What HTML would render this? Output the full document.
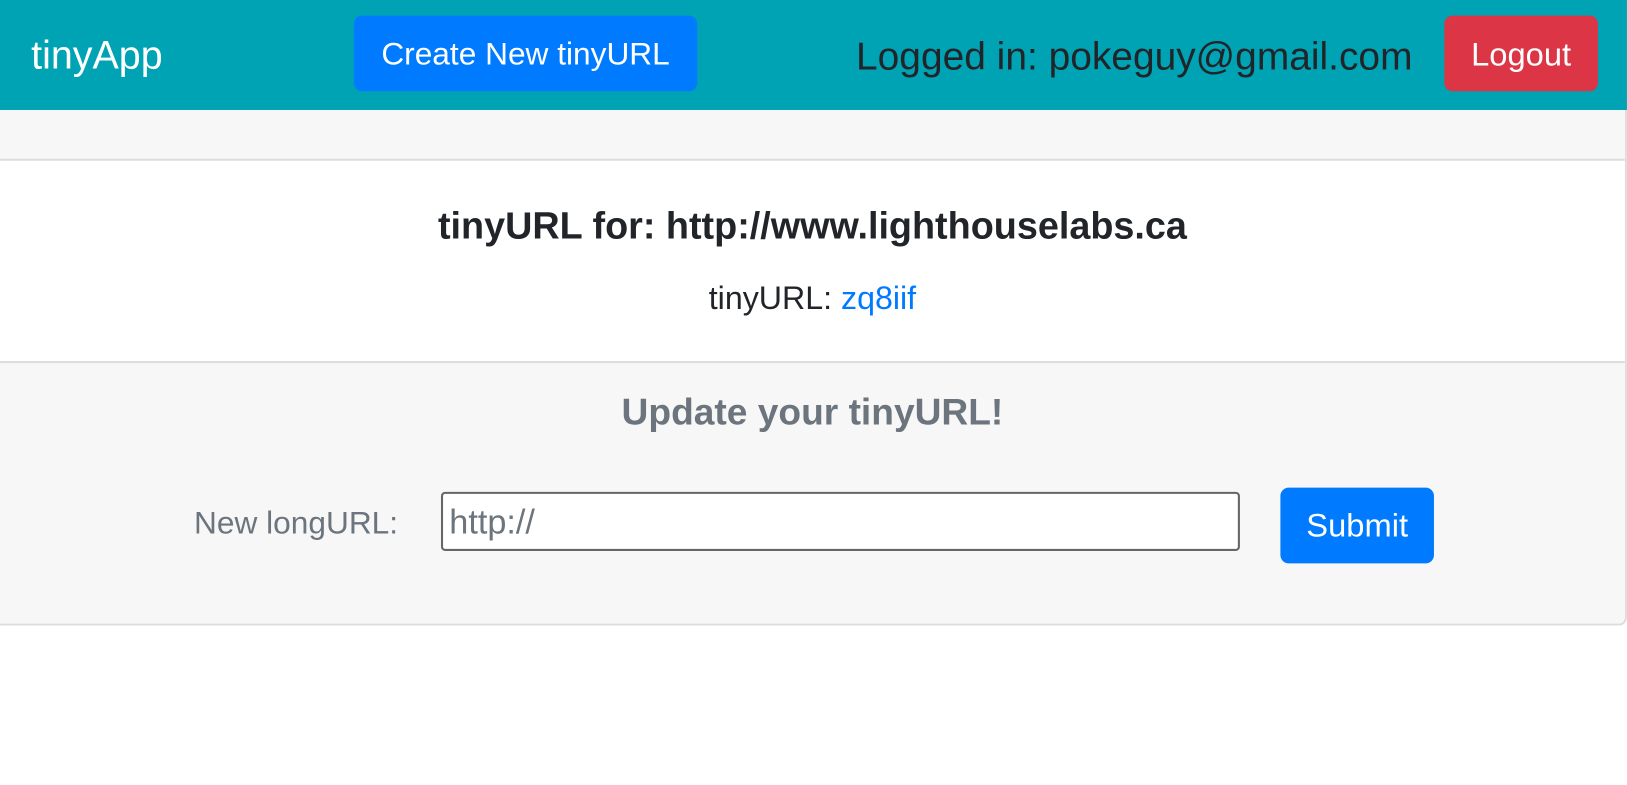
<!DOCTYPE html>
<html><head><meta charset="utf-8"><style>
*{box-sizing:border-box;margin:0;padding:0}
html,body{width:1627px;height:785px;overflow:hidden;background:#fff}
body{font-family:"Liberation Sans",Arial,sans-serif;color:#212529}
.wrap{position:absolute;left:0;top:0;width:1568px;height:757px;transform:scale(1.0376);transform-origin:0 0}
.nav{position:absolute;left:0;top:0;width:1568px;height:106px;background:#00a3b4}
.brand{position:absolute;left:30px;top:32px;font-size:38px;line-height:44px;color:#fff}
.btn{position:absolute;border-radius:8px;color:#fff;display:flex;align-items:center;justify-content:center}
.card{position:absolute;left:0;top:106px;width:1568px;height:497px;border:2px solid #dcdcdc;border-top:none;border-left:none;border-radius:0 0 8px 0;overflow:hidden}
.hdr{height:49px;background:#f7f7f7;border-bottom:2px solid #dcdcdc}
.bd{height:195px;background:#fff;border-bottom:2px solid #dcdcdc;position:relative}
.ft{height:251px;background:#f7f7f7;position:relative}
.c{position:absolute;left:0;width:1566px;text-align:center}
</style></head><body><div class="wrap">
<div class="nav">
<div class="brand">tinyApp</div>
<div class="btn" style="left:341px;top:15px;width:331px;height:73px;background:#007bff;font-size:30.5px;padding-top:2px">Create New tinyURL</div>
<div style="position:absolute;left:825px;top:32px;font-size:37.5px;line-height:44px;color:#212529">Logged in: pokeguy@gmail.com</div>
<div class="btn" style="left:1392px;top:15px;width:148px;height:73px;background:#dc3545;font-size:31.5px;padding-top:2px">Logout</div>
</div>
<div class="card">
<div class="hdr"></div>
<div class="bd">
<div class="c" style="top:42px;font-size:36.4px;line-height:42px;font-weight:bold;color:#212529">tinyURL for: http://www.lighthouselabs.ca</div>
<div class="c" style="top:115px;font-size:31px;line-height:36px">tinyURL: <span style="color:#007bff">zq8iif</span></div>
</div>
<div class="ft">
<div class="c" style="top:26px;font-size:35.8px;line-height:42px;font-weight:bold;color:#6c757d">Update your tinyURL!</div>
<div style="position:absolute;left:187px;top:136px;font-size:30.5px;line-height:36px;color:#6c757d">New longURL:</div>
<div style="position:absolute;left:425px;top:124px;width:770px;height:57px;border:2px solid #666;border-radius:4px;background:#fff;font-size:33px;line-height:38px;color:#6c757d;padding:8px 6px">http://</div>
<div class="btn" style="left:1234px;top:120px;width:148px;height:73px;background:#007bff;font-size:31.5px">Submit</div>
</div>
</div>
</div></body></html>
